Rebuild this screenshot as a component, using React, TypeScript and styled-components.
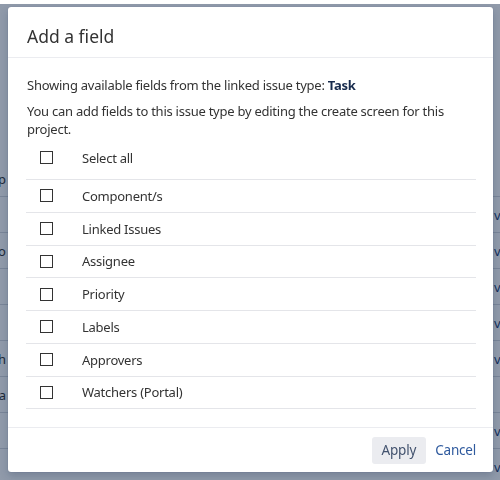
import React from "react";
import styled, { createGlobalStyle } from "styled-components";

const GlobalStyle = createGlobalStyle`
  html, body { margin: 0; padding: 0; }
  body {
    width: 500px;
    height: 480px;
    overflow: hidden;
    background: #ffffff;
    font-family: "Noto Sans", "Open Sans", "Liberation Sans", sans-serif;
    color: #333333;
  }
  * { box-sizing: border-box; }
`;

/* ---------- page behind the overlay ---------- */
const BgPage = styled.div`
  padding-top: 161px;
  width: 500px;
`;

const BgRow = styled.div`
  display: flex;
  justify-content: space-between;
  align-items: center;
  height: 36px;
  border-bottom: 1px solid #d5d8de;
  font-size: 13px;
  color: #333333;
`;

const BgLeft = styled.div`
  width: 6px;
  display: flex;
  justify-content: flex-end;
  white-space: nowrap;
`;

const BgRight = styled.div`
  width: 6px;
  white-space: nowrap;
  color: #1d3f73;
`;

/* ---------- overlay & dialog ---------- */
const Overlay = styled.div`
  position: fixed;
  left: 0;
  right: 0;
  top: 4px;
  bottom: 0;
  background: rgba(9, 30, 66, 0.45);
  display: flex;
  align-items: flex-start;
  padding: 3px 7px 0 8px;
`;

const Dialog = styled.div`
  width: 485px;
  height: 465px;
  background: #ffffff;
  border-radius: 3px;
  box-shadow: 0 0 1px rgba(9, 30, 66, 0.3), 0 4px 8px rgba(9, 30, 66, 0.2);
  display: flex;
  flex-direction: column;
  overflow: hidden;
`;

const Header = styled.div`
  height: 51px;
  padding: 7px 19px 0;
  display: flex;
  align-items: center;
  border-bottom: 1px solid #ebecf0;
`;

const Title = styled.h2`
  margin: 0;
  font-size: 17.5px;
  font-weight: 400;
  line-height: 24px;
  color: #333333;
`;

const Body = styled.div`
  flex: 1;
  padding: 18px 17px 0 19px;
  letter-spacing: -0.25px;
`;

const Intro = styled.p<{ $gap?: boolean }>`
  margin: 0 0 ${(p) => (p.$gap ? "8px" : "0")};
  font-size: 13px;
  line-height: 18px;
  color: #333333;

  strong {
    font-weight: 700;
    color: #172b4d;
  }
`;

const FieldList = styled.div`
  margin: 2px 0 0 -1px;
  display: flex;
  flex-direction: column;
`;

const FieldRow = styled.label<{ $top?: boolean }>`
  display: flex;
  align-items: center;
  height: ${(p) => (p.$top ? "40px" : "32.75px")};
  padding-top: ${(p) => (p.$top ? "2px" : "0")};
  padding-bottom: ${(p) => (p.$top ? "6px" : "0")};
  border-bottom: 1px solid #e4e5e9;
  cursor: pointer;
`;

const Check = styled.input.attrs({ type: "checkbox" })`
  appearance: none;
  -webkit-appearance: none;
  width: 13px;
  height: 13px;
  margin: 0 29px 0 14px;
  border: 1px solid #333333;
  background: #ffffff;
  flex: none;
`;

const FieldLabel = styled.span`
  font-size: 13px;
  line-height: 18px;
  color: #333333;
`;

const Footer = styled.div`
  height: 45px;
  border-top: 1px solid #ebecf0;
  padding: 0 17px 0 19px;
  display: flex;
  justify-content: flex-end;
  align-items: center;
  gap: 9px;
  letter-spacing: -0.2px;
`;

const ApplyButton = styled.button`
  height: 27px;
  padding: 0 10px;
  border: none;
  border-radius: 3px;
  background: #ebecf0;
  font-family: inherit;
  font-size: 13.5px;
  letter-spacing: -0.2px;
  color: #42526e;
  cursor: pointer;
`;

const CancelLink = styled.a`
  font-size: 13.5px;
  color: #2f5a9e;
  text-decoration: none;
  cursor: pointer;
`;

const bgRows = [
  { left: "Up", right: "" },
  { left: "", right: "view" },
  { left: "Lo", right: "view" },
  { left: "", right: "view" },
  { left: "", right: "view" },
  { left: "h", right: "view" },
  { left: "a", right: "" },
  { left: "", right: "view" },
  { left: "", right: "view" },
];

const fields = [
  "Component/s",
  "Linked Issues",
  "Assignee",
  "Priority",
  "Labels",
  "Approvers",
  "Watchers (Portal)",
];

export default function App() {
  return (
    <>
      <GlobalStyle />
      <BgPage>
        {bgRows.map((r, i) => (
          <BgRow key={i}>
            <BgLeft>{r.left}</BgLeft>
            <BgRight>{r.right}</BgRight>
          </BgRow>
        ))}
      </BgPage>
      <Overlay>
        <Dialog role="dialog" aria-label="Add a field">
          <Header>
            <Title>Add a field</Title>
          </Header>
          <Body>
            <Intro $gap>
              Showing available fields from the linked issue type: <strong>Task</strong>
            </Intro>
            <Intro>
              You can add fields to this issue type by editing the create screen for this
              project.
            </Intro>
            <FieldList>
              <FieldRow $top>
                <Check />
                <FieldLabel>Select all</FieldLabel>
              </FieldRow>
              {fields.map((f) => (
                <FieldRow key={f}>
                  <Check />
                  <FieldLabel>{f}</FieldLabel>
                </FieldRow>
              ))}
            </FieldList>
          </Body>
          <Footer>
            <ApplyButton>Apply</ApplyButton>
            <CancelLink>Cancel</CancelLink>
          </Footer>
        </Dialog>
      </Overlay>
    </>
  );
}
